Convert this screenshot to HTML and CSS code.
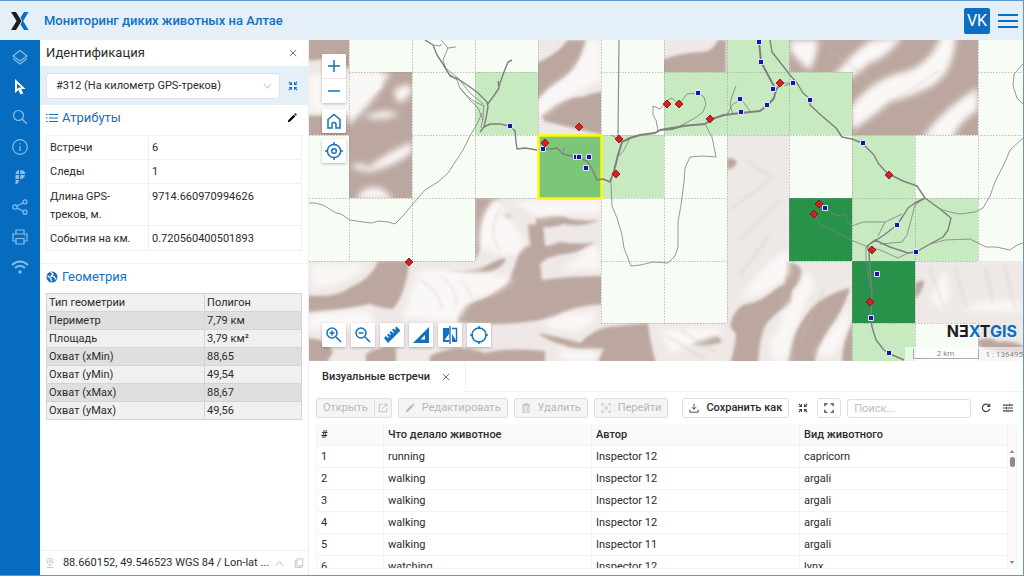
FILE: index.html
```html
<!DOCTYPE html>
<html lang="ru">
<head>
<meta charset="utf-8">
<title>Мониторинг диких животных на Алтае</title>
<link rel="stylesheet" href="styles.css">
</head>
<body>
<svg class="defs" aria-hidden="true">
  <symbol id="i-close" viewBox="0 0 10 10"><path d="M1 1l8 8M9 1l-8 8"/></symbol>
  <symbol id="i-pencil" viewBox="0 0 12 12"><path d="M1 11l.5-2.3L8 2.200l1.900 1.900L3.300 10.600zM8.700 1.500l.8-.8q.5-.4 1 0l.9.9q.4.5 0 1l-.8.800z" fill="currentColor" stroke="none"/></symbol>
  <symbol id="i-shrink" viewBox="0 0 12 12"><path d="M1 1l3 3M11 1L8 4M1 11l3-3M11 11L8 8" stroke-width="1.500"/><path d="M.8 4.800h4V.8zM7.200.8v4h4zM.8 7.200h4v4zM11.200 7.200h-4v4z" fill="currentColor" stroke="none"/></symbol>
</svg>
<div class="app">
  <header class="header">
    <a class="logo" href="#" aria-label="NextGIS">
      <svg width="18" height="18" viewBox="0 0 18 18"><path d="M0 0h5l5.500 9L5 18H0l5.600-9z" fill="#1d1d1f"/><path d="M17.500 0H13l-3.500 5.600 1.700 3.400-1.700 3.400L13 18h4.500L12.200 9z" fill="#0a6fc4"/></svg>
    </a>
    <h1 class="title">Мониторинг диких животных на Алтае</h1>
    <button class="avatar">VK</button>
    <button class="menu" aria-label="Меню"><svg width="20" height="14" viewBox="0 0 20 14"><path d="M0 1h20M0 7h20M0 13h20"/></svg></button>
  </header>
  <div class="main">
    <nav class="rail">
      <button aria-label="Слои"><svg viewBox="0 0 16 16"><path d="M8 1.500L15 7l-7 5-7-5zM1 9.500l7 5.500 7-5.500"/></svg></button>
      <button class="active" aria-label="Идентификация"><svg viewBox="0 0 16 16"><path d="M3 0v14l3.500-3 2 4.500 2.700-1.100-2-4.400H13.500zM5 4.500l4.500 4H7L5 10z" fill="currentColor" fill-rule="evenodd" stroke="none"/></svg></button>
      <button aria-label="Поиск"><svg viewBox="0 0 16 16"><circle cx="6.500" cy="6.500" r="5"/><path d="M10 10l5 5"/></svg></button>
      <button aria-label="Информация"><svg viewBox="0 0 16 16"><circle cx="8" cy="8" r="7.300"/><path d="M8 7v5M8 4v1.300"/></svg></button>
      <button aria-label="Закладки"><svg viewBox="0 0 16 16"><path d="M7 1v4H3.500Q4 1.500 7 1zM8.200 1q5 0 4.800 4H8.200zM3.500 6H7v4H3.500zM8.200 6H13q-.5 4-4.800 4zM3.500 11H7q0 3-3.500 4.500z" fill="currentColor" stroke="none"/></svg></button>
      <button aria-label="Поделиться"><svg viewBox="0 0 16 16"><circle cx="3" cy="8" r="2.200"/><circle cx="13" cy="2.800" r="2"/><circle cx="13" cy="13.200" r="2"/><path d="M5 7l6.200-3.300M5 9l6.200 3.300"/></svg></button>
      <button aria-label="Печать"><svg viewBox="0 0 16 16"><path d="M4 5V1h8v4M4 12H1V5h14v7h-3M4 9.500h8V15H4zM12 7h1"/></svg></button>
      <button aria-label="Трекеры"><svg viewBox="0 0 18 16"><path d="M1 6q8-7 16 0M4 9q5-4.500 10 0" stroke-width="1.800"/><circle cx="9" cy="13" r="1.700" fill="currentColor" stroke="none"/></svg></button>
    </nav>

    <aside class="panel">
      <div class="panel-head"><h2>Идентификация</h2><button class="plain" aria-label="Закрыть"><svg class="s8" viewBox="0 0 10 10"><use href="#i-close"/></svg></button></div>
      <div class="picker">
        <div class="select-box">
          <select aria-label="Объект"><option>#312 (На километр GPS-треков)</option></select>
          <svg class="chev" viewBox="0 0 10 8"><path d="M1 1.500l4 5 4-5"/></svg>
        </div>
        <button class="plain blue" aria-label="Приблизить"><svg class="s10" viewBox="0 0 12 12"><use href="#i-shrink"/></svg></button>
      </div>
      <section class="attrs">
        <div class="sec-head"><h3><svg viewBox="0 0 12 12"><path d="M0 2.500h1.500M0 6h1.500M0 9.500h1.500M3 2.500h9M3 6h9M3 9.500h9" stroke-width="1.200"/></svg>Атрибуты</h3><button class="plain dark" aria-label="Изменить"><svg class="s10" viewBox="0 0 12 12"><use href="#i-pencil"/></svg></button></div>
        <table class="attr-table">
          <tr><th scope="row">Встречи</th><td>6</td></tr>
          <tr><th scope="row">Следы</th><td>1</td></tr>
          <tr><th scope="row">Длина GPS-<br>треков, м.</th><td>9714.660970994626</td></tr>
          <tr><th scope="row">События на км.</th><td>0.720560400501893</td></tr>
        </table>
      </section>
      <section class="geom">
        <div class="sec-head"><h3><svg viewBox="0 0 12 12"><circle cx="6" cy="6" r="5.500" fill="currentColor" stroke="none"/><path d="M1.600 4.800L5 7.500v1L6 10.500M4.500 1.200q2.500.8 2.500 2L5 5l3 .5 1.500 2.500.8-.5" stroke="#fff" stroke-width="1.200"/></svg>Геометрия</h3></div>
        <table class="geom-table">
          <tr><th scope="row">Тип геометрии</th><td>Полигон</td></tr>
          <tr><th scope="row">Периметр</th><td>7,79 км</td></tr>
          <tr><th scope="row">Площадь</th><td>3,79 км²</td></tr>
          <tr><th scope="row">Охват (xMin)</th><td>88,65</td></tr>
          <tr><th scope="row">Охват (yMin)</th><td>49,54</td></tr>
          <tr><th scope="row">Охват (xMax)</th><td>88,67</td></tr>
          <tr><th scope="row">Охват (yMax)</th><td>49,56</td></tr>
        </table>
      </section>
      <footer class="coords">
        <svg class="s10 pin" viewBox="0 0 12 12"><circle cx="6" cy="4.200" r="1.300"/><path d="M6 9.500Q2.500 6.500 2.500 4a3.500 3.500 0 017 0Q9.500 6.500 6 9.500zM2 11.400h8"/></svg>
        <button class="coord-text">88.660152, 49.546523 WGS 84 / Lon-lat ...<svg viewBox="0 0 10 8"><path d="M1 6.500l4-5 4 5"/></svg></button>
        <button class="plain pale" aria-label="Копировать"><svg class="s10" viewBox="0 0 12 12"><path d="M3.500 1h7v8.500h-7zM3.500 3h-2v8.500h7v-2"/></svg></button>
      </footer>
    </aside>

    <div class="work">
      <div class="map">
        <svg class="canvas" viewBox="309 40 714 321" preserveAspectRatio="xMinYMin slice" aria-label="Карта">
          <defs>
            <filter id="soft" x="-5%" y="-5%" width="110%" height="110%"><feGaussianBlur stdDeviation="1.500"/></filter>
            <filter id="haze" x="-5%" y="-5%" width="110%" height="110%"><feGaussianBlur stdDeviation="3"/></filter>
            <path id="red" d="M0-4L4 0 0 4-4 0z" fill="#e3191b" stroke="#5d1a1a" stroke-width=".8"/>
            <path id="blue" d="M-2.500-2.500h5v5h-5z" fill="#1515a8" stroke="#e4e4ff" stroke-width="1"/>
          </defs>
          <rect x="309" y="40" width="714" height="321" fill="#eee8e6"/>
          <g fill="#bba79f" filter="url(#soft)">
            <path d="M305 36h50v35q-15-5-22-17-12 8-28 6zM305 116q15-2 26 1 12-4 24-2v24h-50z"/>
            <path d="M378 66h40v136h-76v-75q16-25 40-40z"/>
            <path d="M534 64q22-8 34-24h18q-6 28-24 40-18 12-28 24zM542 114q20-18 40-17 10-4 22-6v44q-28-6-60-14zM662 60q14-6 36-8 14 2 20-12h8v34h-64z"/>
            <path d="M789 36h195v102h-136v-64h-59z"/>
            <path d="M475 198h26q-12 6-17 22l-4 30-5 10zM494 214q8-3 18 2l-8 5q-8-1-10-7zM528 224q10 2 15-2l2 24q-8 2-15-2z"/>
            <path d="M520 250q10-8 28-4l12-4q20 3 35 0-12 10-30 12-18 2-25 10l2 16q28-4 62-4v28q-32 2-48 12-40 12-98 6-4-10 6-17 24-5 46-27 6-14 10-28z"/>
            <path d="M536 218q20-6 34 1 20 3 30 1-20 8-36 4-12 4-28 3zM444 271q30 1 42-5 14-8 20-8-2 10-20 15-20 3-42-2z"/>
            <path d="M305 295q30 4 46-8 20-8 27-26h31q-2 30-16 48-16-2-23-5-25 6-65 9zM305 338q22 0 28 14l-6 10h-22zM366 354q12-8 30-6v15h-30zM430 356q28-14 55-3 25-6 60-2v12H430z"/>
            <path d="M538 333q30 6 42 10 14-14 28-16l40-4q2 20 8 40h-58q4-12 6-15-26 4-40-3-16-4-26-12zM690 344q14-12 28-8l4 6q-20 6-32 2z"/>
            <path d="M730 326q4-18 16-22 16-2 30-16l16-8v24q-14 6-24 18-8 8-10 42h-28q6-20 6-30zM727 158q8 0 10 4-2 6-10 8z"/>
            <path d="M785 262q16 0 17 12 0 10-17 22zM788 362q2-34 30-60 20-12 32-14-8 26-20 40-12 18-16 36zM842 362q0-24 12-44v44zM915 284q7-6 9-2 0 6-9 18zM978 340q12-4 20 2 12-2 26 4v8q-34-2-46-8z"/>
          </g>
          <g fill="#faf8f7" filter="url(#haze)">
            <path d="M309 76q30-6 45 6 12 16-5 32-20 2-40-4z"/>
            <path d="M346 72h44q-12 26-42 54zM394 90q18-10 18 0-8 16-16 10zM364 118q14-10 34-5-6 8-34 5zM352 166q10-6 16 2 16-14 44-26v10q-20 16-44 20l-16-4zM356 200q8-18 28-10l10 10z"/>
            <path d="M562 80q20-14 26-40h14v40q-30 12-58 34-6 4-8-8 12-20 26-26z"/>
            <path d="M790 40h28q0 14-8 30-10-6-20-20zM832 78q20-26 40-38l30-3q-14 20-34 27-12 12-22 16zM850 108q20-26 46-34 34-6 46-40h14q-2 42-28 54-16 8-38 14-24 20-38 28zM922 138q24-32 56-50v22q-20 12-26 30z"/>
            <path d="M496 198q-20 20-16 50 20 10 40 4 10-10-6-26zM510 200q20 2 30 0 24 2 60 0v14q-24-4-60 4zM420 270q50-2 92 8-10 16-40 20l-16 24-54-4q10-30 18-48zM312 264h54q-16 22-54 24zM309 314l60-4 10 20h-70zM545 322q20-10 52-10-2 14-22 20-12-2-30-4zM560 270q16-8 30-25l10 5v20z"/>
            <path d="M555 352l40-2v10h-30zM660 330q20 0 60-4v8l-50 20zM740 300q24-40 49-50v24q-20 20-49 26zM770 340q10-8 14-30 14-16 20-40 8 4 10 16-10 20-22 50l-4 24h-16zM815 355q14-20 34-50v20l-14 30zM930 300q8-20 14-30 10 20 0 40zM960 310q20-12 60-10v12z"/>
          </g>
          <g fill="none" stroke="#cfc2bd" stroke-width="1.500" opacity=".5" filter="url(#soft)">
            <path d="M420 280q20 10 22 30M440 276q18 12 16 30M460 280q12 10 10 18M500 210q-14 20 0 40M730 210l40-30M740 240l40-40M740 275l30-40M930 268l14 40M955 268l12 40M985 268l8 34M1005 266l10 44M800 340l24-50M665 335l40 24M680 330l36 22M745 160l30 20M880 110l60-40M830 50l40 30"/>
          </g>
          <g fill="#f7fcf5">
            <path d="M349 40h189v32H412v63h63v63h63v-63h-63V72h-63v-0H349z" fill-rule="evenodd"/>
            <path d="M412 72h63v126h-63zM475 135h63v63h-63zM309 135h40v63h-40zM309 198h166v63H309zM601 40h63v95h-63zM664 135h63v63h-63zM601 198h126v125H601zM789 135h63v63h-63zM915 135h63v63h-63zM978 40h45v221h-45zM915 323h63v38h-63z"/>
          </g>
          <path fill="#c8eac1" d="M475 72h63v63h-63zM601 135h63v63h-63zM664 72h63v63h-63zM727 40h62v95h-62zM789 72h63v63h-63zM852 135h63v63h-63zM852 198h126v63H852zM852 323h63v38h-63z"/>
          <path fill="#29924a" d="M789 198h63v63h-63zM852 261h63v62h-63z"/>
          <path fill="none" stroke="#8f8f8f" stroke-opacity=".55" stroke-dasharray="1.500 1.500" d="M349.500 40v221M412.500 40v221M475.500 40v221M538.500 40v158M601.500 40v283M664.500 40v283M727.500 40v283M789.500 40v221M852.500 72v289M915.500 135v226M978.500 40v221M349 72.500h189M601 72.500h251M978 72.500h45M309 135.500h40M412 135.500h440M852 135.500h171M309 198.500h229M601 198.500h126M789 198.500h234M309 261.500h166M601 261.500h126M789 261.500h189M601 323.500h126M852 323.500h126M978.500 323v38"/>
          <path d="M538.500 135.500h63v63h-63z" fill="#7cc67a" stroke="#fbf908" stroke-width="2.500"/>
          <g fill="none" stroke="#7f7f7f" stroke-linejoin="round">
            <g stroke-width="1" opacity=".8">
              <path d="M433 45l7 1 1-2M441 40l7 8 8-1M448 48l-5 12 4 12 10 8 3 8 6 7 9 7 9 4M443 66l15 12 12 15 13 11M460 88l10 12 8 8 5 12M484 105l-1 13-2 10M482 113l-5 11-7 12-7 14-15 23-10 9-13 8-13 15-9 11-8 8-7-2-10-1-6 2-9-1-13-2-9-6-5-1-13-8-8-2h-6"/>
              <path d="M658 131l-2-11-3-5v-9l7 3 8-9 4-2 7 6 8-10 11-1 6 4 2 7-3 8-8 6-15 8M705 124l7 13 2 10 2 10-14-1-12 1-5 11-1 14-3 23-3 17v25l-3 9-7 7-15-1-13 3-9 1-7-18-2-13-5-17-5-12-1-24M727 115l5-10 9-6 9 12M736 86l-4 10-2 9 3 9M630 138l-6 12-5 6M563 154l1-7M611 135l11 6"/>
              <path d="M885 222h-22l-11 4-4-4-3-8-9 2-11-8M815 214l5 11 15 6 13 8 18 7M925 198l-10 7-4 15-4 15-5 7-22 2M940 209l10 3 10 2 15-2 8-4 7-12 5-14 11-22 4-10 13-12M1023 64l-9 10-1 12 4 12 6 6M930 244l15-4 25-1 10 5 6 3h10l14 3 7-5 6-2M885 222l17-8M878 236l7-14M866 246v14l4 28M867 246l13 4 18 8 12-6M784 83h9M784 86l9-3"/>
            </g>
            <path stroke-width="1.400" d="M425 40l8 5 4 10 6 9 7 12 8 3 12 8 8 6 9 9 1 5-2 11-2 9-4 5M484 127l6-3h10l10 2 5 5 1 11 1 7 8-1 12 2M487 105l6-8 6-9-1-7M499 86l5-14 4-10 4-2M542 149h10l5-1 6 6 12 3 12 4 5 8 5 11 6-1 7 3M770 40l2 12 11 14 7 9 7 8 6 10 7 6v6l12 11 14 12 6 9 10 2 10 4 12 12 4 8 9 10 16 8 14 5 8 12-10 5-7 5-5 8-6 9-13 10-17 11M925 198l15 11 11 9-3 12-5 7-13 7-14 8-8 1-18-6-15-7-8 6M867 246l2 6 1 18 2 20-1 28 1 9 4 13 8 10 6 4 14 6"/>
            <path stroke-width="1.200" stroke="#909090" d="M619 40l-1 98"/>
            <path stroke-width="2" d="M610 182l4-11 4-16 4-13 8-4 10-3 15-2 5-3 12-1 10-3 23-2 7-5 12-4 17-2 19-2 8-6 6-7 2-8-8-15-7-13-2-21M776 90l5-7M660 130l24-4"/>
          </g>
          <g>
            <use href="#blue" x="759" y="42"/><use href="#blue" x="761" y="62"/><use href="#blue" x="773" y="89"/><use href="#blue" x="767" y="105"/><use href="#blue" x="740" y="99"/><use href="#blue" x="741" y="112"/><use href="#blue" x="698" y="93"/><use href="#blue" x="793" y="83"/><use href="#blue" x="810" y="100"/><use href="#blue" x="863" y="143"/><use href="#blue" x="897" y="225"/><use href="#blue" x="916" y="252"/><use href="#blue" x="877" y="274"/><use href="#blue" x="871" y="318"/><use href="#blue" x="889" y="353"/><use href="#blue" x="825" y="208"/><use href="#blue" x="510" y="126"/><use href="#blue" x="543" y="149"/><use href="#blue" x="576" y="157"/><use href="#blue" x="579" y="157"/><use href="#blue" x="589" y="157"/><use href="#blue" x="586" y="168"/>
            <use href="#red" x="545" y="143"/><use href="#red" x="579" y="127"/><use href="#red" x="619" y="139"/><use href="#red" x="616" y="174"/><use href="#red" x="667" y="104"/><use href="#red" x="679" y="104"/><use href="#red" x="710" y="119"/><use href="#red" x="780" y="83"/><use href="#red" x="889" y="175"/><use href="#red" x="819" y="204"/><use href="#red" x="814" y="214"/><use href="#red" x="872" y="250"/><use href="#red" x="870" y="302"/><use href="#red" x="409" y="262"/>
          </g>
        </svg>
        <div class="map-left">
          <div class="zoom"><button aria-label="Ближе"><svg viewBox="0 0 18 18"><path d="M9 3v12M3 9h12"/></svg></button><button aria-label="Дальше"><svg viewBox="0 0 18 18"><path d="M3 9h12"/></svg></button></div>
          <button class="tool" aria-label="Весь охват"><svg viewBox="0 0 18 18"><path d="M3 7.500L9 2.500l6 5V16h-4v-3.500a2 2 0 00-4 0V16H3z"/></svg></button>
          <button class="tool" aria-label="Моё положение"><svg viewBox="0 0 18 18"><circle cx="9" cy="9" r="6.600"/><circle cx="9" cy="9" r="2.300"/><path d="M9 0v3M9 15v3M0 9h3M15 9h3"/></svg></button>
        </div>
        <div class="map-tools">
          <button class="tool" aria-label="Приблизить рамкой"><svg viewBox="0 0 18 18"><circle cx="7" cy="7" r="5"/><path d="M11 11l5 5M7 4.500v5M4.500 7h5"/></svg></button>
          <button class="tool" aria-label="Отдалить рамкой"><svg viewBox="0 0 18 18"><circle cx="7" cy="7" r="5"/><path d="M11 11l5 5M4.500 7h5"/></svg></button>
          <button class="tool" aria-label="Измерить расстояние"><svg viewBox="0 0 18 18"><path d="M1 12l2-2 2 2 1-1-2-2 1.500-1.500L7 9l1-1-1.500-1.500L8 5l2 2 1-1-2-2 1.500-1.500L12 4l1-1-1-1 1.500-1.500L17.500 4.500 5 17z" fill="currentColor" stroke="none"/></svg></button>
          <button class="tool" aria-label="Измерить площадь"><svg viewBox="0 0 18 18"><path d="M17 1v16H1zM13 9l-4.500 4.500H13z" fill="currentColor" fill-rule="evenodd" stroke="none"/></svg></button>
          <button class="tool" aria-label="Шторка"><svg viewBox="0 0 18 18"><path d="M2 2h6v14H2zM3.500 14H8V8z" fill="currentColor" fill-rule="evenodd" stroke="none"/><path d="M11 2.500h4.500v13M9 0v18" stroke-width="1.400"/><path d="M11 8l5 8h-5z" fill="currentColor" stroke="none"/></svg></button>
          <button class="tool" aria-label="Координаты"><svg viewBox="0 0 18 18"><circle cx="9" cy="9" r="7"/><path d="M9 0v3M9 15v3M0 9h3M15 9h3"/></svg></button>
        </div>
        <div class="map-info">
          <a class="brand" href="#">NƎ<b>X</b>T<b>GIS</b></a>
          <div class="scale"><span class="bar">2 km</span><span>1 : 136495</span></div>
        </div>
      </div>

      <div class="data">
        <div class="tabs"><div class="tab"><span>Визуальные встречи</span><button class="plain" aria-label="Закрыть вкладку"><svg class="s8" viewBox="0 0 10 10"><use href="#i-close"/></svg></button></div></div>
        <div class="toolbar">
          <div class="group"><button class="btn" disabled>Открыть</button><button class="btn icon-only" disabled aria-label="Открыть в новом окне"><svg class="s10" viewBox="0 0 12 12"><path d="M6 1.500H1.500v9h9V6M5 7l5.500-5.500M7.500 1.500h3v3"/></svg></button></div>
          <button class="btn" disabled><svg class="s10" viewBox="0 0 12 12"><use href="#i-pencil"/></svg>Редактировать</button>
          <button class="btn" disabled><svg class="s10" viewBox="0 0 12 12"><path d="M1 2h10M4 2V1h4v1M2.200 3.500h7.600V11H2.200zM4.500 5v4.500M7.500 5v4.500"/></svg>Удалить</button>
          <button class="btn" disabled><svg class="s10" viewBox="0 0 12 12"><path d="M1 4V1h3M8 1h3v3M11 8v3H8M4 11H1V8"/><circle cx="6" cy="6" r="1.800"/></svg>Перейти</button>
          <button class="btn save"><svg class="s10" viewBox="0 0 12 12"><path d="M6 1v6.500M3.500 5L6 7.500 8.500 5M1 8v3h10V8"/></svg>Сохранить как</button>
          <button class="plain grey" aria-label="Свернуть"><svg class="s10" viewBox="0 0 12 12"><use href="#i-shrink"/></svg></button>
          <button class="btn square" aria-label="Развернуть"><svg class="s10" viewBox="0 0 12 12"><path d="M1 4V1h3M8 1h3v3M11 8v3H8M4 11H1V8" stroke-width="1.300"/></svg></button>
          <input class="search" type="search" placeholder="Поиск..." aria-label="Поиск">
          <button class="plain grey" aria-label="Обновить"><svg class="s10" viewBox="0 0 12 12"><path d="M10 3.500A4.500 4.500 0 1010.500 7M10.500 1v3H7.500" stroke-width="1.400"/></svg></button>
          <button class="plain grey" aria-label="Настройки"><svg class="s10" viewBox="0 0 12 12"><path d="M0 2.500h7M9 2.500h3M8 1v3M0 6h3M5 6h7M4 4.500v3M0 9.500h5M7 9.500h5M6 8v3" stroke-width="1.400"/></svg></button>
        </div>
        <div class="grid">
          <table class="records">
            <colgroup><col class="c-num"><col><col><col></colgroup>
            <thead><tr><th>#</th><th>Что делало животное</th><th>Автор</th><th>Вид животного</th></tr></thead>
            <tbody>
              <tr><td>1</td><td>running</td><td>Inspector 12</td><td>capricorn</td></tr>
              <tr><td>2</td><td>walking</td><td>Inspector 12</td><td>argali</td></tr>
              <tr><td>3</td><td>walking</td><td>Inspector 12</td><td>argali</td></tr>
              <tr><td>4</td><td>walking</td><td>Inspector 12</td><td>argali</td></tr>
              <tr><td>5</td><td>walking</td><td>Inspector 11</td><td>argali</td></tr>
              <tr><td>6</td><td>watching</td><td>Inspector 12</td><td>lynx</td></tr>
            </tbody>
          </table>
          <div class="scroll"><svg viewBox="0 0 8 6"><path d="M4 1l3 4H1z"/></svg><i></i><svg class="down" viewBox="0 0 8 6"><path d="M1 1h6L4 5z"/></svg></div>
        </div>
      </div>
    </div>
  </div>
</div>
</body>
</html>
```
FILE: styles.css
```css
* { box-sizing: border-box; }
body { margin: 0; font: 11px/18px Roboto, "Noto Sans", sans-serif; color: #2b2b2b; }
h1, h2, h3 { margin: 0; font-weight: 500; }
button { font: inherit; color: inherit; border: 0; padding: 0; background: none; cursor: pointer; }
svg { fill: none; stroke: currentColor; display: block; flex: none; }
a { text-decoration: none; }
.defs { position: absolute; width: 0; height: 0; }
.s8 { width: 8px; height: 8px; }
.s10 { width: 10px; height: 10px; }

.app { height: 100vh; display: flex; flex-direction: column; border: 1px solid #5b97d1; border-left-width: 0; overflow: hidden; }
.header { height: 39px; flex: none; display: flex; align-items: center; background: #e5eff8; padding-right: 5px; }
.logo { width: 44px; padding-left: 11px; }
.logo svg { stroke: none; }
.title { flex: 1; font-size: 13px; color: #1370c1; }
.avatar { width: 26px; height: 26px; border-radius: 2px; background: #0b6ec2; color: #fff; font-size: 16px; }
.menu { margin-left: 8px; color: #0b6ec2; }
.menu svg { stroke-width: 2; }
.main { flex: 1; min-height: 0; display: flex; }

.rail { width: 40px; flex: none; background: #066cc0; color: #8dbde6; display: flex; flex-direction: column; align-items: center; gap: 12px; padding-top: 8px; }
.rail button { height: 18px; }
.rail svg { width: 18px; height: 16px; stroke-width: 1.200; }
.rail .active { color: #fff; }

.panel { width: 269px; flex: none; display: flex; flex-direction: column; border-right: 1px solid #eee; background: #fff; }
.plain { display: flex; padding: 2px; color: #555; }
.blue { color: #1370c1; }
.dark { color: #000; }
.pale { color: #bbb; }
.panel-head { height: 26px; display: flex; align-items: center; justify-content: space-between; padding: 0 9px 0 6px; }
.panel-head h2 { font-size: 13px; font-weight: 400; }
.picker { height: 39px; display: flex; align-items: center; gap: 6px; background: #e5eff8; padding: 0 8px 0 6px; }
.select-box { flex: 1; display: grid; align-items: center; }
.select-box > * { grid-area: 1 / 1; }
.select-box select { appearance: none; width: 100%; height: 26px; font: inherit; color: inherit; background: #fff; border: 1px solid #dde3ea; border-radius: 3px; padding: 0 24px 0 9px; }
.chev { width: 9px; height: 8px; justify-self: end; margin-right: 8px; color: #b5b5b5; pointer-events: none; }
.sec-head { display: flex; justify-content: space-between; align-items: center; height: 26px; }
.sec-head h3 { display: flex; align-items: center; gap: 4px; font-size: 13px; font-weight: 400; color: #1370c1; }
.sec-head svg { width: 12px; height: 12px; }
.sec-head .s10 { width: 10px; height: 10px; }
.attrs { padding: 0 6px; }
.attrs .sec-head { padding: 0 3px 0 0; }
.attrs table { margin-top: 4px; }
.geom { margin-top: 12px; padding: 0 6px; border-top: 1px solid #f2f2f2; }
.geom table { margin-top: 3px; }
.panel table { width: 100%; border-collapse: collapse; }
.panel th, .panel td { font-weight: 400; text-align: left; vertical-align: top; }
.attr-table th, .attr-table td { border: 1px solid #f0f0f0; padding: 3px 3px 2px; }
.attr-table tr:nth-child(n+3) > * { padding-top: 4px; }
.attr-table tr:nth-child(3) > * { padding-bottom: 1px; }
.attr-table th { width: 40%; }
.geom-table th, .geom-table td { border: 1px solid #d4d4d4; padding: 0 2px; line-height: 17px; }
.geom-table th { width: 62%; }
.geom-table tr { background: #f0f0f0; }
.geom-table tr:nth-child(even) { background: #dfdfdf; }
.coords { margin-top: auto; height: 25px; border-top: 1px solid #f0f0f0; display: flex; align-items: center; justify-content: space-between; padding: 0 2px 0 5px; }
.pin { color: #bbb; }
.coord-text { display: flex; align-items: center; gap: 6px; white-space: nowrap; }
.coord-text svg { width: 9px; height: 7px; color: #bbb; }

.work { flex: 1; min-width: 0; display: flex; flex-direction: column; }
.map { flex: 3 1 321px; min-height: 0; position: relative; overflow: hidden; color: #1370c1; }
.canvas { width: 100%; height: 100%; stroke: none; }
.map-left { position: absolute; left: 13px; top: 14px; display: grid; gap: 6px; }
.map-tools { position: absolute; left: 13px; bottom: 14px; display: flex; gap: 5px; }
.zoom { display: grid; gap: 1px; background: #e8e8e8; box-shadow: 0 1px 3px rgba(0, 0, 0, .25); }
.map-left button, .map-tools button { width: 24px; height: 24px; display: grid; place-items: center; background: #fff; border-radius: 1px; }
.map .tool { box-shadow: 0 1px 3px rgba(0, 0, 0, .25); }
.map-left svg, .map-tools svg { width: 18px; height: 18px; stroke-width: 1.500; }
.map-info { position: absolute; right: 0; bottom: 0; display: flex; flex-direction: column; align-items: flex-end; }
.brand { font: 700 16px/20px Inter, sans-serif; color: #1d1d1f; padding-right: 6px; margin-bottom: 6px; }
.brand b { font-weight: 700; color: #0b6ec2; }
.scale { display: flex; align-items: center; gap: 7px; height: 14px; padding-left: 8px; background: rgba(255, 255, 255, .6); color: #8a8a8a; font-size: 8px; line-height: 9px; }
.bar { width: 66px; text-align: center; border: 1px solid #aaa; border-top: 0; }

.data { flex: 2 1 214px; min-height: 0; display: flex; flex-direction: column; background: #fff; padding-bottom: 6px; }
.tabs { flex: none; height: 31px; display: flex; border-bottom: 1px solid #f0f0f0; }
.tab { display: flex; align-items: center; gap: 10px; padding: 0 13px; border-right: 1px solid #f0f0f0; background: #fff; font-weight: 500; margin-bottom: -1px; }
.toolbar { flex: none; display: flex; align-items: center; gap: 6px; padding: 6px 7px; }
.btn { height: 20px; display: flex; align-items: center; gap: 7px; padding: 0 6px; border: 1px solid #dedede; border-radius: 3px; background: #fff; white-space: nowrap; }
.btn:disabled { background: #f5f5f5; color: #b8b8b8; cursor: default; }
.group { display: flex; }
.group .btn:first-child { border-radius: 3px 0 0 3px; }
.group .icon-only { border-left: 0; border-radius: 0 3px 3px 0; padding: 0 3px; }
.save { margin-left: 8px; font-weight: 500; }
.grey { color: #444; padding: 3px; }
.search { flex: 1; min-width: 0; height: 19px; border: 1px solid #dedede; border-radius: 3px; font: inherit; padding: 0 6px; margin-right: 1px; }
.search::placeholder { color: #bdbdbd; }
.grid { flex: 1; min-height: 0; margin: 0 6px 0 7px; display: flex; align-items: stretch; overflow: hidden; border: 1px solid #f3f3f3; border-top: 0; border-radius: 3px; }
.records { flex: 1; width: 100%; table-layout: fixed; border-collapse: separate; border-spacing: 0; height: max-content; }
.c-num { width: 67px; }
.records th, .records td { height: 22px; line-height: 20px; padding: 0 4px; text-align: left; border-right: 1px solid #f3f3f3; border-bottom: 1px solid #f3f3f3; }
.records th { font-weight: 500; line-height: 21px; background: #fafafa; }
.scroll { width: 8px; flex: none; display: flex; flex-direction: column; align-items: center; background: #fafafa; padding: 25px 0 3px; color: #8b8b8b; }
.scroll svg { width: 6px; height: 5px; fill: currentColor; stroke: none; }
.scroll i { width: 5px; height: 10px; border-radius: 3px; background: #8b8b8b; margin-top: 3px; }
.scroll .down { margin-top: auto; }
```
